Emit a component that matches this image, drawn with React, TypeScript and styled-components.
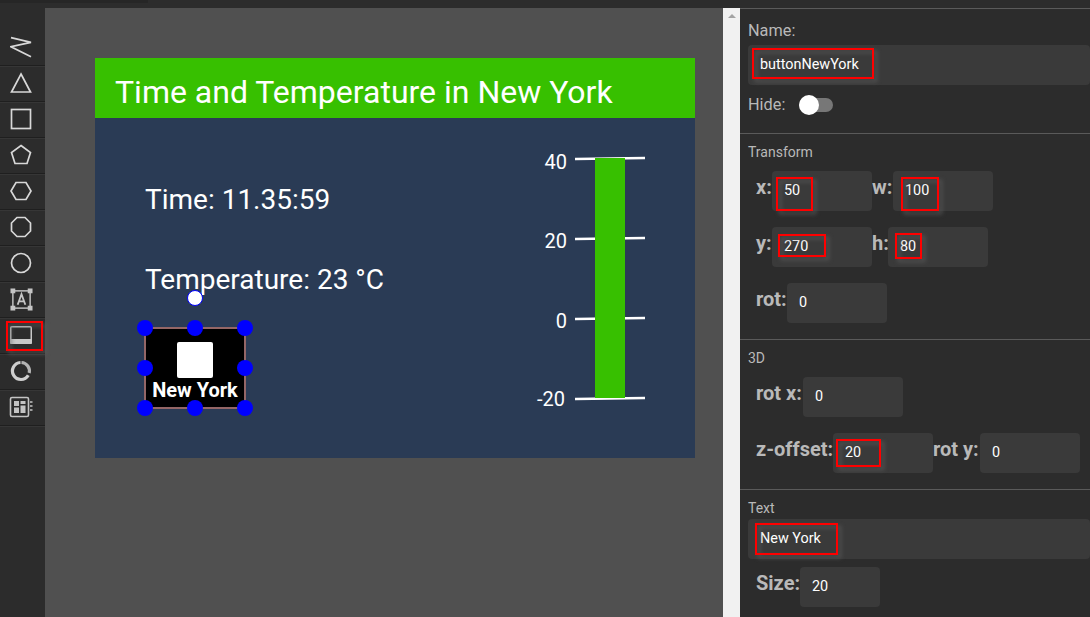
import styled, { createGlobalStyle } from "styled-components"

const Global = createGlobalStyle`
html, body { margin: 0; padding: 0; background: #2c2c2c; overflow: hidden; }
* { box-sizing: border-box; }
`

const Page = styled.div`
width: 1090px;
height: 617px;
overflow: hidden;
display: flex;
flex-direction: column;
font-family: Roboto, "Liberation Sans", sans-serif;
background: #2c2c2c;
`
const TopBar = styled.div`
height: 8px;
flex: none;
background: #2c2c2c;
`
const TopShade = styled.div`
width: 148px;
height: 3px;
background: #262626;
`
const Main = styled.div`
flex: 1;
display: flex;
min-height: 0;
`
const Toolbar = styled.div`
width: 45px;
flex: none;
padding-top: 22px;
background: #2c2c2c;
position: relative;
`
const Tool = styled.div`
height: 36px;
display: flex;
align-items: center;
justify-content: center;
border-bottom: 1px solid #1f1f1f;
box-shadow: 0 1px 0 #363636;
padding-right: 3px;
padding-bottom: 1px;
`
const Stage = styled.div`
width: 678px;
flex: none;
background: #505050;
padding: 50px 0 0 50px;
`
const Canvas = styled.div`
position: relative;
width: 600px;
height: 400px;
background: #2a3b55;
color: #fff;
`
const Title = styled.div`
height: 60px;
background: #37c000;
padding-left: 20px;
font-size: 32px;
line-height: 68px;
`
const Reading = styled.div<{ top: number }>`
position: absolute;
left: 50px;
top: ${({ top }) => top}px;
font-size: 28px;
line-height: 32px;
white-space: nowrap;
`
const ScaleLabel = styled.div<{ top: number; right?: number }>`
position: absolute;
right: ${({ right }) => right ?? 128}px;
top: ${({ top }) => top}px;
font-size: 20px;
line-height: 24px;
`
const Scale = styled.svg`
position: absolute;
left: 480px;
top: 90px;
`
const Handle = styled.div<{ x: number; y: number }>`
position: absolute;
left: ${({ x }) => x - 8}px;
top: ${({ y }) => y - 8}px;
width: 16px;
height: 16px;
border-radius: 50%;
background: #0000ff;
`
const RotateHandle = styled(Handle)`
background: #fff;
border: 1px solid #0000ff;
`
const CanvasButton = styled.div`
position: absolute;
left: 49px;
top: 269px;
width: 102px;
height: 82px;
background: #000;
border: 2px solid #946666;
display: flex;
flex-direction: column;
align-items: center;
`
const ButtonImage = styled.div`
width: 36px;
height: 36px;
margin-top: 13px;
background: #fff;
border-radius: 2px;
`
const ButtonText = styled.div`
font-size: 20px;
font-weight: 700;
line-height: 24px;
white-space: nowrap;
`
const Scrollbar = styled.div`
width: 17px;
flex: none;
background: #f1f1f1;
display: flex;
justify-content: center;
padding-top: 6px;
`
const Arrow = styled.div`
width: 0;
height: 0;
border-left: 4px solid transparent;
border-right: 4px solid transparent;
border-bottom: 4px solid #a3a3a3;
`
const Panel = styled.div`
flex: 1;
min-width: 0;
background: #2c2c2c;
color: #b9b9b9;
border-top: 1px solid #5a5a5a;
`
const Section = styled.div<{ h: number }>`
height: ${({ h }) => h}px;
padding: 0 0 0 8px;
border-bottom: 1px solid #5a5a5a;
`
const LastSection = styled.div`
padding-left: 8px;
`
const FieldLabel = styled.div<{ mt?: number }>`
font-size: 16.3px;
line-height: 19px;
padding-top: ${({ mt }) => mt ?? 0}px;
`
const Heading = styled.div<{ mt: number }>`
font-size: 14px;
line-height: 16px;
padding-top: ${({ mt }) => mt}px;
`
const Row = styled.div<{ mt: number }>`
display: flex;
margin-top: ${({ mt }) => mt}px;
padding-left: 8px;
font-size: 20px;
font-weight: 700;
line-height: 21px;
`
const RowLabel = styled.span<{ w: number }>`
white-space: nowrap;
margin-top: 6px;
width: ${({ w }) => w}px;
`
const Input = styled.div<{ w?: number; mt?: number }>`
position: relative;
width: ${({ w }) => (w ? `${w}px` : "100%")};
margin-top: ${({ mt }) => mt ?? 0}px;
height: 40px;
padding: 0 12px;
flex: none;
background: #3a3a3a;
border-radius: 4px;
color: #fff;
font-size: 14.4px;
font-weight: 400;
line-height: 39px;
white-space: nowrap;
`
const Mark = styled.div<{ x: number; y: number; w: number; h: number }>`
position: absolute;
left: ${({ x }) => x}px;
top: ${({ y }) => y}px;
width: ${({ w }) => w}px;
height: ${({ h }) => h}px;
border: 2px solid #ff0000;
filter: drop-shadow(3px 3px 2px rgba(92, 92, 92, 0.95));
pointer-events: none;
`
const HideRow = styled.div`
display: flex;
align-items: center;
margin-top: 9px;
height: 20px;
`
const Switch = styled.div`
position: relative;
width: 34px;
height: 14px;
margin-left: 14px;
margin-top: 2px;
border-radius: 7px;
background: #777;
`
const Knob = styled.div`
position: absolute;
left: 0;
top: -3px;
width: 20px;
height: 20px;
border-radius: 50%;
background: #fff;
`

const strokeIcon = { fill: "none", stroke: "#d8d8d8", strokeWidth: 1.7 }

const icons = [
  <svg width="22" height="22" viewBox="0 0 22 22" {...strokeIcon} key="line"><path d="M1 1.7 21 6.3 1 10.7 21 20.7" /></svg>,
  <svg width="22" height="22" viewBox="0 0 22 22" {...strokeIcon} key="tri"><path d="M11 2 20.5 20H1.5Z" /></svg>,
  <svg width="22" height="22" viewBox="0 0 22 22" {...strokeIcon} key="rect"><rect x="1.5" y="1.5" width="19" height="19" /></svg>,
  <svg width="22" height="22" viewBox="0 0 22 22" {...strokeIcon} key="penta"><path d="M11 1.5 20.5 8.5 17 19.5H5L1.5 8.5Z" /></svg>,
  <svg width="22" height="22" viewBox="0 0 22 22" {...strokeIcon} key="hexa"><path d="M6 2.5H16L21 11 16 19.5H6L1 11Z" /></svg>,
  <svg width="22" height="22" viewBox="0 0 22 22" {...strokeIcon} key="octa"><path d="M7 1.5H15L20.5 7V15L15 20.5H7L1.5 15V7Z" /></svg>,
  <svg width="22" height="22" viewBox="0 0 22 22" {...strokeIcon} key="circle"><circle cx="11" cy="11" r="9.5" /></svg>,
  <svg width="23" height="23" viewBox="0 0 24 24" key="text">
    <rect x="3" y="3" width="18" height="18" fill="none" stroke="#c4c4c4" strokeWidth="1.5" />
    <g fill="#c4c4c4"><rect x="0.5" y="0.5" width="5" height="5" /><rect x="18.5" y="0.5" width="5" height="5" /><rect x="0.5" y="18.5" width="5" height="5" /><rect x="18.5" y="18.5" width="5" height="5" /></g>
    <path d="M8 17.5 12 6.5 16 17.5M9.4 14H14.6" fill="none" stroke="#c4c4c4" strokeWidth="1.9" />
  </svg>,
  <svg width="22" height="18" viewBox="0 0 22 18" key="button">
    <rect x="0.75" y="0.75" width="20.5" height="16.5" rx="1" fill="none" stroke="#c8c8c8" strokeWidth="1.5" />
    <rect x="0" y="13" width="22" height="5" rx="1" fill="#c8c8c8" />
  </svg>,
  <svg width="22" height="22" viewBox="0 0 22 22" key="gauge" fill="none" strokeWidth="3.2">
    <path d="M11.5 2.5A8.5 8.5 0 0 1 19.2 13" stroke="#b4b4b4" />
    <path d="M18.3 15.3A8.5 8.5 0 1 1 10.5 2.5" stroke="#cfcfcf" />
  </svg>,
  <svg width="24" height="22" viewBox="0 0 24 22" key="panel">
    <rect x="1.5" y="1.5" width="18" height="19" rx="1.5" fill="none" stroke="#c4c4c4" strokeWidth="1.6" />
    <rect x="5" y="5" width="5" height="5" fill="#c4c4c4" /><rect x="5" y="11.5" width="5" height="5.5" fill="#c4c4c4" /><rect x="11.5" y="5" width="5" height="3" fill="#c4c4c4" /><rect x="11.5" y="9.5" width="5" height="7.5" fill="#c4c4c4" />
    <path d="M21 6h2.5M21 10h2.5M21 14h2.5" stroke="#c4c4c4" strokeWidth="1.5" />
  </svg>,
]

const handles: [number, number][] = [
  [50, 270], [100, 270], [150, 270],
  [50, 310], [150, 310],
  [50, 350], [100, 350], [150, 350],
]

const ticks = [10, 90, 170, 250]

const App = () => {
  return (
    <Page>
      <Global />
      <TopBar><TopShade /></TopBar>
      <Main>
        <Toolbar>
          {icons.map((icon) => (
            <Tool key={icon.key}>{icon}</Tool>
          ))}
          <Mark x={6} y={313} w={37} h={30} />
        </Toolbar>
        <Stage>
          <Canvas>
            <Title>Time and Temperature in New York</Title>
            <Reading top={126}>Time: 11.35:59</Reading>
            <Reading top={206}>Temperature: 23 °C</Reading>
            <ScaleLabel top={92}>40</ScaleLabel>
            <ScaleLabel top={171}>20</ScaleLabel>
            <ScaleLabel top={251}>0</ScaleLabel>
            <ScaleLabel top={329} right={130}>-20</ScaleLabel>
            <Scale width="70" height="260" viewBox="0 0 70 260">
              {ticks.map((t) => (
                <line key={t} x1="0" y1={t + 1} x2="70" y2={t} stroke="#fff" strokeWidth="2.5" />
              ))}
              <rect x="20" y="10" width="30" height="240" fill="#37c000" />
            </Scale>
            <CanvasButton>
              <ButtonImage />
              <ButtonText>New York</ButtonText>
            </CanvasButton>
            <RotateHandle x={100} y={240} />
            {handles.map(([x, y]) => (
              <Handle key={`${x}-${y}`} x={x} y={y} />
            ))}
          </Canvas>
        </Stage>
        <Scrollbar>
          <Arrow />
        </Scrollbar>
        <Panel>
          <Section h={125}>
            <FieldLabel mt={12}>Name:</FieldLabel>
            <Input mt={5}>
              buttonNewYork
              <Mark x={4} y={3} w={122} h={31} />
            </Input>
            <HideRow>
              <FieldLabel>Hide:</FieldLabel>
              <Switch><Knob /></Switch>
            </HideRow>
          </Section>
          <Section h={206}>
            <Heading mt={10}>Transform</Heading>
            <Row mt={11}>
              <RowLabel w={16}>x:</RowLabel>
              <Input w={100}>50<Mark x={4} y={6} w={37} h={34} /></Input>
              <RowLabel w={21}>w:</RowLabel>
              <Input w={100}>100<Mark x={8} y={6} w={38} h={34} /></Input>
            </Row>
            <Row mt={16}>
              <RowLabel w={16}>y:</RowLabel>
              <Input w={100}>270<Mark x={6} y={7} w={48} h={23} /></Input>
              <RowLabel w={16}>h:</RowLabel>
              <Input w={100}>80<Mark x={7} y={6} w={27} h={26} /></Input>
            </Row>
            <Row mt={16}>
              <RowLabel w={31}>rot:</RowLabel>
              <Input w={100}>0</Input>
            </Row>
          </Section>
          <Section h={150}>
            <Heading mt={10}>3D</Heading>
            <Row mt={11}>
              <RowLabel w={47}>rot x:</RowLabel>
              <Input w={100}>0</Input>
            </Row>
            <Row mt={16}>
              <RowLabel w={77}>z-offset:</RowLabel>
              <Input w={100}>20<Mark x={3} y={6} w={45} h={28} /></Input>
              <RowLabel w={47}>rot y:</RowLabel>
              <Input w={100}>0</Input>
            </Row>
          </Section>
          <LastSection>
            <Heading mt={10}>Text</Heading>
            <Input mt={3}>
              New York
              <Mark x={7} y={4} w={83} h={32} />
            </Input>
            <Row mt={8}>
              <RowLabel w={44}>Size:</RowLabel>
              <Input w={80}>20</Input>
            </Row>
          </LastSection>
        </Panel>
      </Main>
    </Page>
  )
}

export default App
